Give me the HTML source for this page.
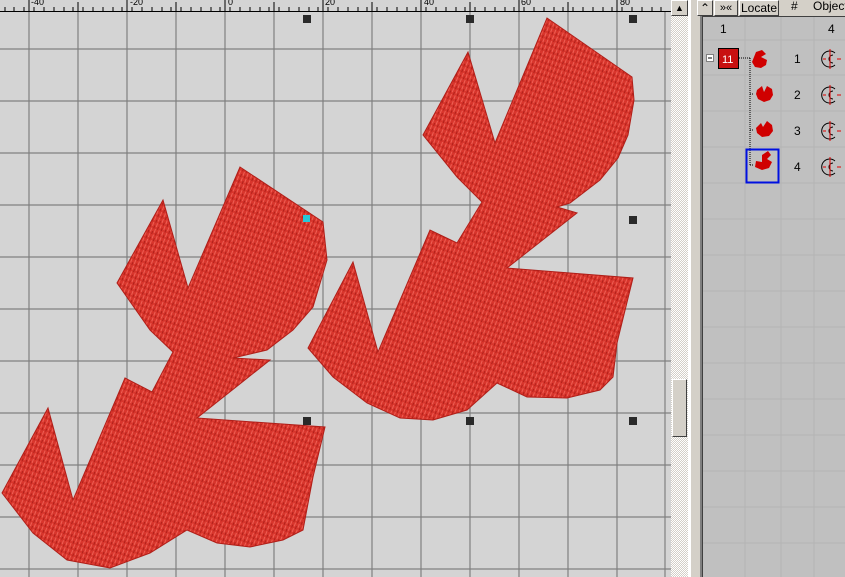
<!DOCTYPE html>
<html><head><style>
body{margin:0;width:845px;height:577px;overflow:hidden;background:#d4d0c8;font-family:"Liberation Sans",sans-serif;position:relative}
.a{position:absolute}
.btn{position:absolute;top:0;height:14px;background:#d4d0c8;border:1px solid;border-color:#fff #404040 #404040 #fff;font-size:12px;line-height:14px;text-align:center;color:#000}
</style></head><body>
<svg class="a" style="left:0;top:0" width="671" height="577">
<defs>
<pattern id="st" width="4" height="6" patternUnits="userSpaceOnUse" patternTransform="rotate(20)">
<rect width="4" height="6" fill="#d8352c"/>
<rect x="0" y="0" width="1" height="4" fill="#ee6055"/>
<rect x="2" y="3" width="1" height="3" fill="#b0201a"/>
</pattern>
</defs>
<rect width="671" height="577" fill="#d4d4d4"/>
<g stroke="#808080" stroke-width="1.2">
<line x1="29" y1="12" x2="29" y2="577"/><line x1="78" y1="12" x2="78" y2="577"/><line x1="127" y1="12" x2="127" y2="577"/><line x1="176" y1="12" x2="176" y2="577"/><line x1="225" y1="12" x2="225" y2="577"/><line x1="274" y1="12" x2="274" y2="577"/><line x1="323" y1="12" x2="323" y2="577"/><line x1="372" y1="12" x2="372" y2="577"/><line x1="421" y1="12" x2="421" y2="577"/><line x1="470" y1="12" x2="470" y2="577"/><line x1="519" y1="12" x2="519" y2="577"/><line x1="568" y1="12" x2="568" y2="577"/><line x1="617" y1="12" x2="617" y2="577"/><line x1="665" y1="12" x2="665" y2="577"/>
<line x1="0" y1="49" x2="671" y2="49"/><line x1="0" y1="101" x2="671" y2="101"/><line x1="0" y1="153" x2="671" y2="153"/><line x1="0" y1="205" x2="671" y2="205"/><line x1="0" y1="257" x2="671" y2="257"/><line x1="0" y1="309" x2="671" y2="309"/><line x1="0" y1="361" x2="671" y2="361"/><line x1="0" y1="413" x2="671" y2="413"/><line x1="0" y1="465" x2="671" y2="465"/><line x1="0" y1="517" x2="671" y2="517"/><line x1="0" y1="569" x2="671" y2="569"/>
</g>
<rect width="671" height="12" fill="#d4d4d4"/>
<line x1="0" y1="11.5" x2="671" y2="11.5" stroke="#000"/>
<g stroke="#000">
<path d="M5 11V7M14 11V7M24 11V7M34 11V7M44 11V7M54 11V7M64 11V7M73 11V7M83 11V7M93 11V7M103 11V7M113 11V7M122 11V7M132 11V7M142 11V7M152 11V7M162 11V7M171 11V7M181 11V7M191 11V7M201 11V7M211 11V7M220 11V7M230 11V7M240 11V7M250 11V7M260 11V7M269 11V7M279 11V7M289 11V7M299 11V7M309 11V7M318 11V7M328 11V7M338 11V7M348 11V7M358 11V7M367 11V7M377 11V7M387 11V7M397 11V7M407 11V7M416 11V7M426 11V7M436 11V7M446 11V7M456 11V7M465 11V7M475 11V7M485 11V7M495 11V7M505 11V7M514 11V7M524 11V7M534 11V7M544 11V7M554 11V7M563 11V7M573 11V7M583 11V7M593 11V7M603 11V7M612 11V7M622 11V7M632 11V7M642 11V7M652 11V7M661 11V7"/>
<path d="M29 11V0M78 11V2M127 11V0M176 11V2M225 11V0M274 11V2M323 11V0M372 11V2M421 11V0M470 11V2M519 11V0M568 11V2M617 11V0"/>
</g>
<g font-size="9" fill="#000"><text x="31" y="5">-40</text><text x="130" y="5">-20</text><text x="228" y="5">0</text><text x="325" y="5">20</text><text x="424" y="5">40</text><text x="521" y="5">60</text><text x="620" y="5">80</text></g>
<g fill="url(#st)" stroke="#b01e18" stroke-width="1">
<polygon points="547,18 632,77 634,100 628,135 618,158 600,180 570,203 557,207 577,213 507,268 633,278 617,343 613,377 600,390 567,398 527,397 497,383 467,410 433,420 400,418 367,403 333,377 308,348 353,262 378,352 430,230 457,243 482,202 457,177 423,135 468,52 495,143"/>
<polygon points="240,167 323,222 327,260 313,307 293,330 267,350 233,358 270,360 197,418 325,427 313,477 303,530 283,540 250,547 217,543 187,530 150,553 110,568 67,560 33,533 2,493 48,408 73,500 125,378 152,392 173,352 150,330 117,283 163,200 188,288"/>
</g>
<g fill="#2a2a2a"><rect x="303" y="15" width="8" height="8"/><rect x="466" y="15" width="8" height="8"/><rect x="629" y="15" width="8" height="8"/><rect x="629" y="216" width="8" height="8"/><rect x="303" y="417" width="8" height="8"/><rect x="466" y="417" width="8" height="8"/><rect x="629" y="417" width="8" height="8"/></g>
<rect x="303" y="215" width="7" height="7" fill="#28c8d8"/>
</svg>
<div class="a" style="left:671px;top:0;width:17px;height:577px;background:repeating-conic-gradient(#fff 0 25%,#d4d0c8 0 50%) 0 0/2px 2px"></div>
<div class="btn" style="left:671px;width:15px;font-size:9px">▲</div>
<div class="a" style="left:672px;top:379px;width:13px;height:56px;background:#d4d0c8;border:1px solid;border-color:#fff #404040 #404040 #fff"></div>
<div class="a" style="left:688px;top:0;width:3px;height:577px;background:#fff"></div>
<div class="a" style="left:700px;top:0;width:2px;height:577px;background:#808080"></div>
<div class="btn" style="left:697px;width:14px">⌃</div>
<div class="btn" style="left:714px;width:22px;font-size:11px">»«</div>
<div class="btn" style="left:739px;width:38px">Locate</div>
<div class="a" style="left:791px;top:0;font-size:12px;line-height:13px">#</div>
<div class="a" style="left:813px;top:0;font-size:12px;line-height:13px">Object</div>
<svg class="a" style="left:702px;top:16px" width="143" height="561">
<rect width="143" height="561" fill="#c0c0c0"/>
<line x1="0" y1="0.5" x2="143" y2="0.5" stroke="#404040"/>
<line x1="0.5" y1="0" x2="0.5" y2="561" stroke="#404040"/>
<g stroke="#b4b4b4"><line x1="43" y1="1" x2="43" y2="561"/><line x1="79" y1="1" x2="79" y2="561"/><line x1="112" y1="1" x2="112" y2="561"/>
<line x1="1" y1="24" x2="143" y2="24"/><line x1="1" y1="59" x2="143" y2="59"/><line x1="1" y1="95" x2="143" y2="95"/><line x1="1" y1="131" x2="143" y2="131"/><line x1="1" y1="167" x2="143" y2="167"/><line x1="1" y1="203" x2="143" y2="203"/><line x1="1" y1="239" x2="143" y2="239"/><line x1="1" y1="275" x2="143" y2="275"/><line x1="1" y1="311" x2="143" y2="311"/><line x1="1" y1="347" x2="143" y2="347"/><line x1="1" y1="383" x2="143" y2="383"/><line x1="1" y1="419" x2="143" y2="419"/><line x1="1" y1="455" x2="143" y2="455"/><line x1="1" y1="491" x2="143" y2="491"/><line x1="1" y1="527" x2="143" y2="527"/></g>
<g font-size="12" fill="#000"><text x="18" y="17">1</text><text x="126" y="17">4</text><text x="92" y="47">1</text><text x="92" y="83">2</text><text x="92" y="119">3</text><text x="92" y="155">4</text></g>
<rect x="4.5" y="38.5" width="7" height="7" fill="#fff" stroke="#808080"/><line x1="6" y1="42" x2="10" y2="42" stroke="#000"/>
<rect x="16.5" y="32.5" width="20" height="20" fill="#c81010" stroke="#000"/><text x="20" y="47" font-size="11" fill="#fff">11</text>
<path d="M37 42H48M48 42V149M48 78H52M48 114H52M48 149H52" stroke="#000" stroke-dasharray="1 1" fill="none"/>
<g fill="#d00000">
<path d="M54 36 l6 -2 l4 4 l-5 3 l6 3 l-1 5 l-5 3 l-6 -1 l-3 -5 z"/>
<path d="M55 74 l5 -4 l2 6 l3 -6 l5 3 l1 6 l-3 5 l-6 2 l-6 -3 l-2 -5 z"/>
<path d="M54 112 l5 -5 l2 4 l4 -6 l5 4 l1 6 l-4 5 l-7 1 l-5 -4 z"/>
<path d="M60 139l6-4 3 4-4 4 5 3-3 6-7 2-7-3 1-6 6 1z"/>
</g>
<rect x="44.5" y="133.5" width="32" height="33" fill="none" stroke="#0010e0" stroke-width="2"/>
<g fill="none" stroke="#000"><path d="M133 37a8 8 0 1 0 0 12M131 39a4 4 0 1 0 0 8"/><path d="M133 73a8 8 0 1 0 0 12M131 75a4 4 0 1 0 0 8"/><path d="M133 109a8 8 0 1 0 0 12M131 111a4 4 0 1 0 0 8"/><path d="M133 145a8 8 0 1 0 0 12M131 147a4 4 0 1 0 0 8"/></g>
<g stroke="#e00000"><path d="M128 33V53M121 43h3M135 43h4M128 69V89M121 79h3M135 79h4M128 105V125M121 115h3M135 115h4M128 141V161M121 151h3M135 151h4"/></g>
</svg>
</body></html>
